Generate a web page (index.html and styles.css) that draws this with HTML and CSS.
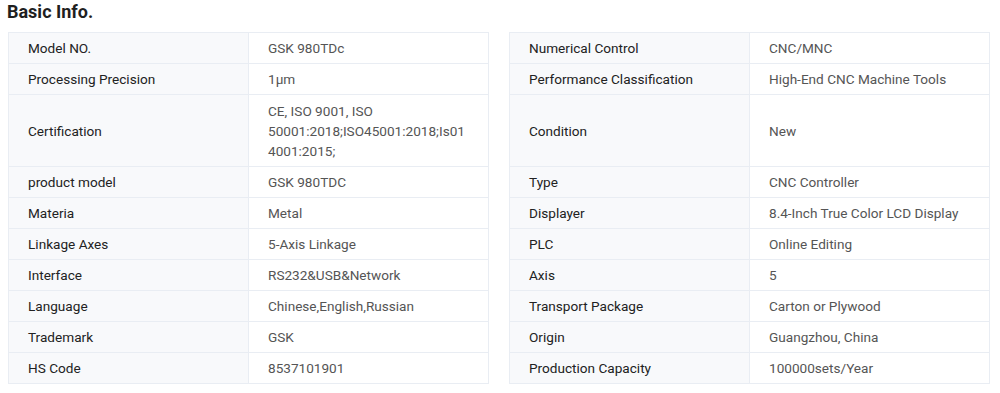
FILE: index.html
```html
<!DOCTYPE html>
<html lang="en">
<head>
  <meta charset="UTF-8">
  <title>Basic Info.</title>
  <link rel="stylesheet" href="styles.css">
</head>
<body>
  <div class="basic-info">
    <h2 class="section-title">Basic Info.</h2>
    <div class="info-tables">
      <table class="info-table">
        <tbody>
          <tr><th>Model NO.</th><td>GSK 980TDc</td></tr>
          <tr><th>Processing Precision</th><td>1&mu;m</td></tr>
          <tr class="tall-row"><th>Certification</th><td>CE, ISO 9001, ISO 50001:2018;ISO45001:2018;Is014001:2015;</td></tr>
          <tr><th>product model</th><td>GSK 980TDC</td></tr>
          <tr><th>Materia</th><td>Metal</td></tr>
          <tr><th>Linkage Axes</th><td>5-Axis Linkage</td></tr>
          <tr><th>Interface</th><td>RS232&amp;USB&amp;Network</td></tr>
          <tr><th>Language</th><td>Chinese,English,Russian</td></tr>
          <tr><th>Trademark</th><td>GSK</td></tr>
          <tr><th>HS Code</th><td>8537101901</td></tr>
        </tbody>
      </table>
      <table class="info-table">
        <tbody>
          <tr><th>Numerical Control</th><td>CNC/MNC</td></tr>
          <tr><th>Performance Classification</th><td>High-End CNC Machine Tools</td></tr>
          <tr class="tall-row"><th>Condition</th><td>New</td></tr>
          <tr><th>Type</th><td>CNC Controller</td></tr>
          <tr><th>Displayer</th><td>8.4-Inch True Color LCD Display</td></tr>
          <tr><th>PLC</th><td>Online Editing</td></tr>
          <tr><th>Axis</th><td>5</td></tr>
          <tr><th>Transport Package</th><td>Carton or Plywood</td></tr>
          <tr><th>Origin</th><td>Guangzhou, China</td></tr>
          <tr><th>Production Capacity</th><td>100000sets/Year</td></tr>
        </tbody>
      </table>
    </div>
  </div>
</body>
</html>
```

FILE: styles.css
```css
body {
  margin: 0;
  font-family: Roboto, "Liberation Sans", Arial, sans-serif;
  background: #ffffff;
  color: #222222;
}
.basic-info {
  padding: 0 10px 0 8px;
}
.section-title {
  margin: 0 0 0 -1px;
  height: 32px;
  font-size: 18px;
  font-weight: bold;
  line-height: 24px;
  color: #1f1f1f;
}
.info-tables {
  display: flex;
  gap: 20px;
  align-items: flex-start;
}
.info-table {
  flex: 1;
  width: 50%;
  border-collapse: collapse;
  table-layout: fixed;
  font-size: 13.6px;
  line-height: 20px;
}
.info-table th,
.info-table td {
  border: 1px solid #e9edf3;
  padding: 5px 20px 5px 19px;
  text-align: left;
  vertical-align: middle;
  font-weight: normal;
  overflow-wrap: break-word;
}
.info-table th {
  background: #f8f9fb;
  color: #222222;
}
.info-table td {
  color: #555555;
}
.tall-row th,
.tall-row td {
  height: 61px;
}
```
